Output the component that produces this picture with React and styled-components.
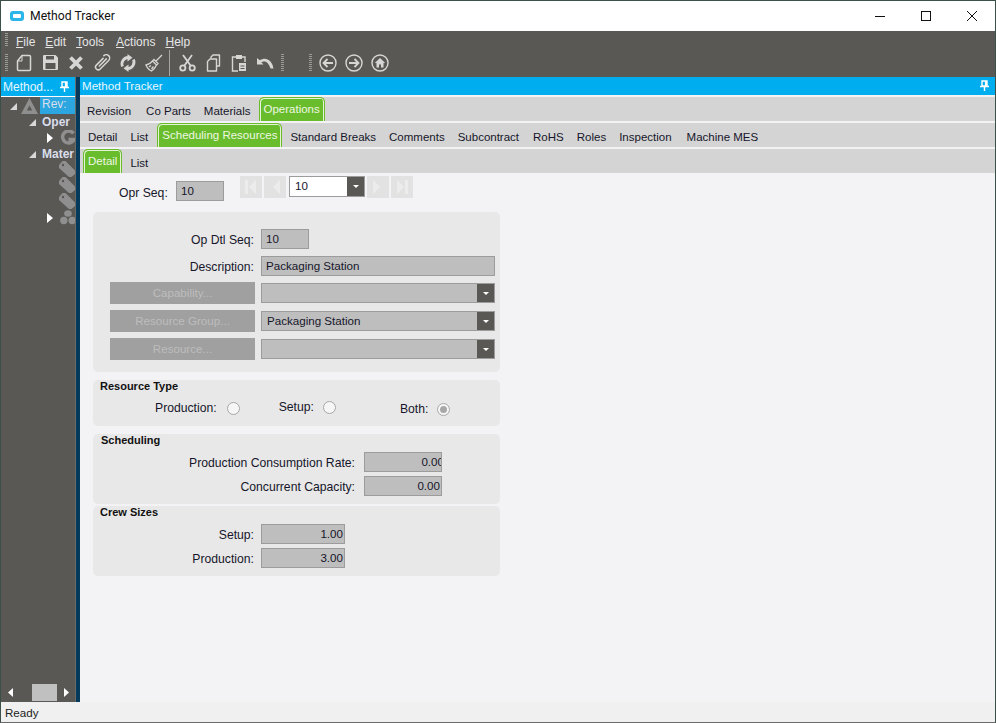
import React from 'react'
import styled, { createGlobalStyle } from 'styled-components'

const Global = createGlobalStyle`
    html, body { margin: 0; padding: 0; background: #fff; }
    * { box-sizing: border-box; }
`

const Win = styled.div`
    width: 996px;
    height: 723px;
    border: 1px solid #3d4f49;
    border-bottom: 1px solid #6a6a6a;
    display: flex;
    flex-direction: column;
    overflow: hidden;
    font-family: "Liberation Sans", Arial, sans-serif;
    font-size: 11.6px;
    color: #16162a;
    background: #f3f3f5;
`

const TitleBar = styled.div`
    height: 30px;
    flex: none;
    background: #fff;
    display: flex;
    align-items: center;
    padding-left: 9px;
    font-family: Roboto, sans-serif;
    font-size: 12.2px;
    color: #111;
`

const AppIcon = styled.span`
    width: 14px;
    height: 10px;
    border-radius: 3px;
    background: #2bb5e8;
    margin-right: 6px;
    display: flex;
    align-items: center;
    justify-content: center;
    &::after {
        content: '';
        width: 8px;
        height: 4px;
        border-radius: 1px;
        background: #fff;
    }
`

const WinButtons = styled.div`
    margin-left: auto;
    display: flex;
`

const WinButton = styled.span`
    width: 46px;
    height: 30px;
    display: flex;
    align-items: center;
    justify-content: center;
`

const MenuBar = styled.div`
    height: 17px;
    flex: none;
    background: #595855;
    display: flex;
    align-items: center;
    color: #e6e6e6;
    font-size: 12px;
    padding-left: 4px;
`

const Grip = styled.span`
    width: 3px;
    height: ${p => p.$h || 16}px;
    flex: none;
    background: repeating-linear-gradient(to bottom, #9a9a96 0 1px, transparent 1px 2px);
    margin-left: ${p => p.$ml || 0}px;
`

const MenuItem = styled.span`
    margin-left: ${p => p.$ml}px;
    padding-top: 4px;
    u { text-underline-offset: 1px; }
`

const ToolBar = styled.div`
    height: 29px;
    flex: none;
    background: #595855;
    display: flex;
    align-items: center;
    padding-left: 4px;
`

const Tool = styled.span`
    width: 26px;
    height: 20px;
    flex: none;
    display: flex;
    align-items: center;
    justify-content: center;
    margin-left: ${p => p.$ml || 0}px;
`

const ToolSep = styled.span`
    width: 1px;
    height: 26px;
    background: #a5a5a2;
    margin: 0 4px 0 2px;
    flex: none;
`

const Work = styled.div`
    flex: 1;
    display: flex;
    min-height: 0;
`

const Side = styled.div`
    width: 74px;
    flex: none;
    background: #595855;
    display: flex;
    flex-direction: column;
    overflow: hidden;
`

const SideHead = styled.div`
    height: 19px;
    flex: none;
    background: #00aeef;
    color: #e8f6fd;
    display: flex;
    align-items: center;
    justify-content: space-between;
    padding: 0 6px 0 2px;
    font-size: 12px;
`

const Tree = styled.div`
    flex: 1;
    border-top: 1px solid #fff;
    overflow: hidden;
`

const Node = styled.div`
    height: ${p => p.$h || 16}px;
    display: flex;
    align-items: center;
    padding-left: ${p => p.$indent}px;
    white-space: nowrap;
    color: #d9deea;
    font-size: 12px;
`

const NodeLabel = styled.span`
    font-weight: ${p => (p.$sel ? 400 : 700)};
    padding: 0 3px 0 2px;
    height: ${p => (p.$sel ? 17 : 16)}px;
    line-height: ${p => (p.$sel ? 15 : 16)}px;
    flex: 1;
    background: ${p => (p.$sel ? '#2ba6e0' : 'transparent')};
    margin-left: ${p => p.$ml || 3}px;
`

const NodeIcon = styled.span`
    display: flex;
    flex: none;
    margin-left: ${p => p.$ml || 0}px;
`

const SideScroll = styled.div`
    height: 19px;
    flex: none;
    display: flex;
    align-items: center;
    padding-left: 7px;
`

const ScrollThumb = styled.span`
    width: 25px;
    height: 17px;
    background: #c0c0c0;
    margin: 0 7px 0 19px;
`

const Splitter = styled.div`
    width: 5px;
    flex: none;
    background: #063a5c;
    border-left: 1px solid #6b6b68;
`

const Main = styled.div`
    flex: 1;
    min-width: 0;
    display: flex;
    flex-direction: column;
`

const MainHead = styled.div`
    height: 18px;
    flex: none;
    background: #00aeef;
    color: #e8f6fd;
    display: flex;
    align-items: center;
    justify-content: space-between;
    padding: 0 6px 1px 2px;
    margin-bottom: 2px;
`

const TabRow = styled.div`
    height: 24px;
    flex: none;
    background: #d4d4d4;
    margin-bottom: ${p => p.$mb ?? 2}px;
    display: flex;
    align-items: stretch;
    padding-left: ${p => p.$pl}px;
    font-size: 11.5px;
`

const Tab = styled.span`
    display: flex;
    align-items: center;
    padding-top: 3px;
    margin-right: ${p => p.$mr || 13}px;
    white-space: nowrap;
`

const ActiveTab = styled.span`
    display: flex;
    align-items: center;
    padding: 0 4px 2px 4px;
    margin-right: ${p => p.$mr || 9}px;
    color: #eef7e2;
    white-space: nowrap;
    background: #69bd2c;
    border: 1px solid #69bd2c;
    border-bottom: 0;
    border-radius: 5px 5px 0 0;
    box-shadow: inset 1px 1px 0 #e4f3d6, inset -1px 0 0 #e4f3d6;
`

const Content = styled.div`
    flex: 1;
    padding-left: 13px;
    min-height: 0;
`

const SeqBar = styled.div`
    height: 39px;
    padding: 3px 0 0 26px;
    display: flex;
    align-items: flex-start;
`

const SeqLabel = styled.span`
    width: 57px;
    flex: none;
    margin-top: 10px;
    font-size: 12.2px;
`

const Field = styled.div`
    width: ${p => p.$w}px;
    height: ${p => p.$h || 20}px;
    flex: none;
    background: #bebebe;
    border: 1px solid #9c9c9c;
    display: flex;
    align-items: center;
    justify-content: ${p => (p.$num ? 'flex-end' : 'flex-start')};
    padding: 0 ${p => (p.$num ? 1 : 4)}px 1px 4px;
    margin-top: ${p => p.$mt || 0}px;
    overflow: hidden;
    white-space: nowrap;
`

const ClippedValue = styled.span`
    margin-right: -4px;
`

const NavBtn = styled.span`
    width: 22px;
    height: 22px;
    flex: none;
    background: #e2e2e2;
    margin-left: ${p => p.$ml || 2}px;
    display: flex;
    align-items: center;
    justify-content: center;
`

const Combo = styled.div`
    width: ${p => p.$w}px;
    height: ${p => p.$h || 20}px;
    flex: none;
    background: ${p => (p.$light ? '#fff' : '#bebebe')};
    border: 1px solid #9c9c9c;
    display: flex;
    align-items: center;
    margin-left: ${p => p.$ml || 0}px;
`

const ComboText = styled.span`
    flex: 1;
    padding: 0 0 2px 5px;
`

const ComboBtn = styled.span`
    width: 17px;
    align-self: stretch;
    background: #595855;
    display: flex;
    align-items: center;
    justify-content: center;
    &::after {
        content: '';
        border-left: 3px solid transparent;
        border-right: 3px solid transparent;
        border-top: 3px solid #fff;
    }
`

const Panel = styled.section`
    width: 407px;
    height: ${p => p.$h}px;
    background: #e8e8e8;
    border-radius: 5px;
    margin-bottom: ${p => p.$mb || 0}px;
    padding: ${p => p.$pt || 0}px 5px 0 ${p => p.$pl || 0}px;
`

const PanelTitle = styled.div`
    font-size: 11px;
    font-weight: 700;
    color: #111;
    height: 13px;
    line-height: 13px;
    margin-bottom: ${p => p.$mb || 0}px;
    padding-left: ${p => p.$pl || 7}px;
`

const FormRow = styled.div`
    height: ${p => p.$h || 22}px;
    display: flex;
    align-items: center;
    margin-top: ${p => p.$mt || 0}px;
`

const RowLabel = styled.span`
    width: ${p => p.$w}px;
    text-align: right;
    flex: none;
    font-size: 12.2px;
    padding-top: 2px;
    margin-right: ${p => p.$mr || 7}px;
`

const LookupBtn = styled.span`
    width: 145px;
    height: 22px;
    flex: none;
    background: #a0a0a0;
    color: #bdbdbd;
    display: flex;
    align-items: center;
    justify-content: center;
    padding-bottom: 2px;
    margin-right: 6px;
`

const RadioRow = styled.div`
    display: flex;
    padding-left: 62px;
    margin-top: 7px;
    font-size: 12.2px;
`

const RadioOption = styled.label`
    display: flex;
    align-items: center;
    height: 16px;
    margin-top: ${p => p.$mt}px;
    margin-right: ${p => p.$mr || 0}px;
`

const Radio = styled.span`
    width: 13px;
    height: 13px;
    border-radius: 50%;
    border: 1px solid #a8a8a8;
    background: #f6f6f6;
    margin-left: ${p => p.$ml || 10}px;
    display: flex;
    align-items: center;
    justify-content: center;
    &::after {
        content: '';
        width: 7px;
        height: 7px;
        border-radius: 50%;
        background: ${p => (p.$on ? '#a8a8a8' : 'transparent')};
    }
`

const Status = styled.div`
    height: 20px;
    flex: none;
    background: #f0f0f0;
    display: flex;
    align-items: center;
    padding: 0 0 0 4px;
    color: #222;
`

const ICON = '#d6d6d4'

const Pin = () => (
    <svg width="9" height="11" viewBox="0 0 9 11" fill="none" stroke="#fff" strokeWidth="1.4">
        <path d="M2 1h5v5H2zM5.600 1v5M0 6.500h9M4.500 6.500V11" />
    </svg>
)

const NewDoc = () => (
    <svg width="16" height="18" viewBox="0 0 16 18" fill="none" stroke={ICON} strokeWidth="1.5" strokeLinejoin="round">
        <path d="M6 1.500h7.500a1 1 0 0 1 1 1v13a1 1 0 0 1-1 1h-11a1 1 0 0 1-1-1V7z" />
        <path d="M6 1.500V7H1.500" strokeWidth="1" />
    </svg>
)

const Floppy = () => (
    <svg width="17" height="17" viewBox="0 0 17 17" fill={ICON}>
        <path d="M1 2a1 1 0 0 1 1-1h11.500L16 3.500V15a1 1 0 0 1-1 1H2a1 1 0 0 1-1-1zM4 2v3.500h8V2zM3.500 9v6h10V9z" fillRule="evenodd" />
    </svg>
)

const Cross = () => (
    <svg width="14" height="14" viewBox="0 0 14 14" stroke={ICON} strokeWidth="3.800">
        <path d="M1.500 1.500l11 11M12.500 1.500l-11 11" />
    </svg>
)

const Clip = () => (
    <svg width="18" height="18" viewBox="0 0 18 18" fill="none" stroke={ICON} strokeWidth="1.500" strokeLinecap="round">
        <g transform="rotate(45 9 9)">
            <path d="M6.500 6v9.500a2.700 2.700 0 0 0 5.400 0V3.500a3.400 3.400 0 0 0-6.800 0" transform="translate(0 -1)" />
            <path d="M9.200 4v10" transform="translate(0 -1)" />
        </g>
    </svg>
)

const Refresh = () => (
    <svg width="18" height="18" viewBox="0 0 18 18" fill={ICON} stroke="none">
        <path d="M3.500 12.500A6.500 6.500 0 0 1 9 3.500" fill="none" stroke={ICON} strokeWidth="2.800" />
        <path d="M8.500 0v7.500l5-3.700z" />
        <path d="M14.500 5.500A6.500 6.500 0 0 1 9 14.500" fill="none" stroke={ICON} strokeWidth="2.800" />
        <path d="M9.500 10.500V18l-5-3.700z" />
    </svg>
)

const Broom = () => (
    <svg width="18" height="18" viewBox="0 0 18 18" fill="none" stroke={ICON} strokeWidth="1.300">
        <path d="M17 1l-6 6M9 5.500l4 4-1.500 1.500-4-4zM7.500 7C6 9 3.500 10.500 1 11c1 2.500 3 5 5.500 6 2-1.500 4-3.500 5-6" />
        <path d="M4 13l2-1.500M6.500 15l2-2.500" />
    </svg>
)

const Shears = () => (
    <svg width="17" height="18" viewBox="0 0 17 18" fill="none" stroke={ICON} strokeWidth="1.800">
        <circle cx="3.800" cy="14" r="2.600" />
        <circle cx="13.200" cy="14" r="2.600" />
        <path d="M5.300 11.800L13 1M11.700 11.800L4 1" />
    </svg>
)

const CopyDocs = () => (
    <svg width="15" height="18" viewBox="0 0 15 18" fill="none" stroke={ICON} strokeWidth="1.400" strokeLinejoin="round">
        <path d="M5 4.500V3l2-2h6.500v11H11" />
        <path d="M4 5h6.500v12h-9V7.500z" />
    </svg>
)

const PasteBoard = () => (
    <svg width="16" height="18" viewBox="0 0 16 18" fill="none" stroke={ICON} strokeWidth="1.400">
        <path d="M5 3H1.500v14H7M11 3h3v5" />
        <rect x="5" y="1" width="6" height="4" fill={ICON} stroke="none" />
        <path d="M8 9h7v8H8z" fill={ICON} stroke="none" />
        <path d="M9.500 12h4M9.500 14.500h4" stroke="#595855" strokeWidth="1" />
    </svg>
)

const UndoArrow = () => (
    <svg width="17" height="12" viewBox="0 0 17 12" fill={ICON}>
        <path d="M0 1v6.500h6.500L4.300 5.300C7 3.500 11 4 13.500 11.500H16.500C15 3 9 -.5 2.800 3.300z" />
    </svg>
)

const CircleArrow = ({ right }) => (
    <svg width="18" height="18" viewBox="0 0 18 18" fill="none" stroke={ICON} strokeWidth="1.400">
        <circle cx="9" cy="9" r="8" />
        <path d={right ? 'M4 9h9M9.500 5l4 4-4 4' : 'M14 9H5M8.500 5l-4 4 4 4'} strokeWidth="1.800" />
    </svg>
)

const HomeCircle = () => (
    <svg width="18" height="18" viewBox="0 0 18 18" fill="none" stroke={ICON} strokeWidth="1.400">
        <circle cx="9" cy="9" r="8" />
        <path d="M9 4L3.800 9H5.500v4.500h2.500V10.500h2v3h2.500V9h1.700z" fill={ICON} stroke="none" />
    </svg>
)

const TreeArrow = ({ open }) => (
    <svg width="9" height="10" viewBox="0 0 9 10" style={{ flex: 'none' }}>
        {open
            ? <path d="M8 2v7H1z" fill="#d8d8d8" />
            : <path d="M1 0l6 5-6 5z" fill="#fff" />}
    </svg>
)

const Warn = () => (
    <svg width="17" height="16" viewBox="0 0 17 16">
        <path d="M8.500 0L17 16H0zM8.500 7.500L5.800 12.500h5.400z" fill="#8f8f8f" fillRule="evenodd" />
    </svg>
)

const Gear = () => (
    <svg width="16" height="16" viewBox="0 0 16 16" fill="none" stroke="#8f8f8f" strokeWidth="3.500">
        <path d="M13.500 3.500A6 6 0 1 0 14 9.500H8.500" />
    </svg>
)

const TagIcon = () => (
    <svg width="16" height="16" viewBox="0 0 16 16">
        <path d="M0 4L3.500 0H6.500L16 9.500V13L12.500 16H10L0 7z" fill="#8f8f8f" />
        <circle cx="4" cy="4" r="1.200" fill="#595855" />
    </svg>
)

const Stack = () => (
    <svg width="16" height="15" viewBox="0 0 16 15" fill="#8f8f8f">
        <ellipse cx="8" cy="3.500" rx="3.800" ry="3.300" />
        <ellipse cx="3.800" cy="10.500" rx="3.700" ry="3.700" />
        <ellipse cx="12.200" cy="10.500" rx="3.700" ry="3.700" />
    </svg>
)

const NavIcon = ({ dir, stop }) => (
    <svg width="14" height="16" viewBox="0 0 14 16" fill="#ececec">
        <g transform={dir === 'r' ? 'matrix(-1 0 0 1 14 0)' : undefined}>
            {stop && <rect x="1" y="1" width="3" height="14" />}
            <path d="M12 1v14L5 8z" />
        </g>
    </svg>
)

const ScrollArrow = ({ right }) => (
    <svg width="5" height="9" viewBox="0 0 5 9" fill="#fff" style={{ flex: 'none' }}>
        <path d={right ? 'M0 0l5 4.500L0 9z' : 'M5 0L0 4.500 5 9z'} />
    </svg>
)

function App() {
    return (
        <Win>
            <Global />
            <TitleBar>
                <AppIcon />
                Method Tracker
                <WinButtons>
                    <WinButton>
                        <svg width="10" height="1"><rect width="10" height="1" fill="#111" /></svg>
                    </WinButton>
                    <WinButton>
                        <svg width="10" height="10" fill="none" stroke="#111"><rect x=".5" y=".5" width="9" height="9" /></svg>
                    </WinButton>
                    <WinButton>
                        <svg width="10" height="10" stroke="#111"><path d="M0 0l10 10M10 0L0 10" /></svg>
                    </WinButton>
                </WinButtons>
            </TitleBar>
            <MenuBar>
                <Grip $h={14} />
                <MenuItem $ml={8}><u>F</u>ile</MenuItem>
                <MenuItem $ml={10}><u>E</u>dit</MenuItem>
                <MenuItem $ml={10}><u>T</u>ools</MenuItem>
                <MenuItem $ml={12}><u>A</u>ctions</MenuItem>
                <MenuItem $ml={10}><u>H</u>elp</MenuItem>
            </MenuBar>
            <ToolBar>
                <Grip $h={18} />
                <Tool $ml={3}><NewDoc /></Tool>
                <Tool><Floppy /></Tool>
                <Tool><Cross /></Tool>
                <Tool><Clip /></Tool>
                <Tool><Refresh /></Tool>
                <Tool><Broom /></Tool>
                <ToolSep />
                <Tool><Shears /></Tool>
                <Tool><CopyDocs /></Tool>
                <Tool><PasteBoard /></Tool>
                <Tool><UndoArrow /></Tool>
                <Grip $h={18} $ml={3} />
                <Grip $h={18} $ml={25} />
                <Tool $ml={3}><CircleArrow /></Tool>
                <Tool><CircleArrow right /></Tool>
                <Tool><HomeCircle /></Tool>
            </ToolBar>
            <Work>
                <Side>
                    <SideHead>Method...<Pin /></SideHead>
                    <Tree>
                        <Node $indent={8} $h={17}>
                            <TreeArrow open />
                            <NodeIcon $ml={3}><Warn /></NodeIcon>
                            <NodeLabel $sel $ml={2}>Rev:</NodeLabel>
                        </Node>
                        <Node $indent={27} $h={16}><TreeArrow open /><NodeLabel>Oper</NodeLabel></Node>
                        <Node $indent={45} $h={16}><TreeArrow /><NodeIcon $ml={5}><Gear /></NodeIcon></Node>
                        <Node $indent={27} $h={15}><TreeArrow open /><NodeLabel>Mater</NodeLabel></Node>
                        <Node $indent={58}><TagIcon /></Node>
                        <Node $indent={58}><TagIcon /></Node>
                        <Node $indent={58}><TagIcon /></Node>
                        <Node $indent={45} $h={17}><TreeArrow /><NodeIcon $ml={5}><Stack /></NodeIcon></Node>
                    </Tree>
                    <SideScroll>
                        <ScrollArrow />
                        <ScrollThumb />
                        <ScrollArrow right />
                    </SideScroll>
                </Side>
                <Splitter />
                <Main>
                    <MainHead>Method Tracker<Pin /></MainHead>
                    <TabRow $pl={7}>
                        <Tab $mr={15}>Revision</Tab>
                        <Tab $mr={13}>Co Parts</Tab>
                        <Tab $mr={8}>Materials</Tab>
                        <ActiveTab>Operations</ActiveTab>
                    </TabRow>
                    <TabRow $pl={8}>
                        <Tab>Detail</Tab>
                        <Tab $mr={9}>List</Tab>
                        <ActiveTab $mr={8}>Scheduling Resources</ActiveTab>
                        <Tab>Standard Breaks</Tab>
                        <Tab>Comments</Tab>
                        <Tab $mr={14}>Subcontract</Tab>
                        <Tab>RoHS</Tab>
                        <Tab>Roles</Tab>
                        <Tab $mr={15}>Inspection</Tab>
                        <Tab>Machine MES</Tab>
                    </TabRow>
                    <TabRow $pl={3} $mb={0}>
                        <ActiveTab $mr={8}>Detail</ActiveTab>
                        <Tab>List</Tab>
                    </TabRow>
                    <Content>
                        <SeqBar>
                            <SeqLabel>Opr Seq:</SeqLabel>
                            <Field $w={48} $mt={5}>10</Field>
                            <NavBtn $ml={16}><NavIcon dir="l" stop /></NavBtn>
                            <NavBtn><NavIcon dir="l" /></NavBtn>
                            <Combo $w={76} $h={21} $ml={3} $light>
                                <ComboText>10</ComboText>
                                <ComboBtn />
                            </Combo>
                            <NavBtn><NavIcon dir="r" /></NavBtn>
                            <NavBtn><NavIcon dir="r" stop /></NavBtn>
                        </SeqBar>
                        <Panel $h={160} $mb={8} $pt={16} $pl={17}>
                            <FormRow>
                                <RowLabel $w={144}>Op Dtl Seq:</RowLabel>
                                <Field $w={48}>10</Field>
                            </FormRow>
                            <FormRow $mt={5}>
                                <RowLabel $w={144}>Description:</RowLabel>
                                <Field $w={234}>Packaging Station</Field>
                            </FormRow>
                            <FormRow $mt={5}>
                                <LookupBtn>Capability...</LookupBtn>
                                <Combo $w={234}><ComboText /><ComboBtn /></Combo>
                            </FormRow>
                            <FormRow $mt={6}>
                                <LookupBtn>Resource Group...</LookupBtn>
                                <Combo $w={234}><ComboText>Packaging Station</ComboText><ComboBtn /></Combo>
                            </FormRow>
                            <FormRow $mt={6}>
                                <LookupBtn>Resource...</LookupBtn>
                                <Combo $w={234}><ComboText /><ComboBtn /></Combo>
                            </FormRow>
                        </Panel>
                        <Panel $h={46} $mb={8}>
                            <PanelTitle>Resource Type</PanelTitle>
                            <RadioRow>
                                <RadioOption $mt={0} $mr={39}>Production:<Radio /></RadioOption>
                                <RadioOption $mt={-1} $mr={64}>Setup:<Radio $ml={9} /></RadioOption>
                                <RadioOption $mt={1}>Both:<Radio $ml={9} $on /></RadioOption>
                            </RadioRow>
                        </Panel>
                        <Panel $h={70} $mb={2}>
                            <PanelTitle $mb={5} $pl={8}>Scheduling</PanelTitle>
                            <FormRow $h={20}>
                                <RowLabel $w={262} $mr={9}>Production Consumption Rate:</RowLabel>
                                <Field $w={78} $num><ClippedValue>0.00</ClippedValue></Field>
                            </FormRow>
                            <FormRow $h={20} $mt={4}>
                                <RowLabel $w={262} $mr={9}>Concurrent Capacity:</RowLabel>
                                <Field $w={78} $num>0.00</Field>
                            </FormRow>
                        </Panel>
                        <Panel $h={70}>
                            <PanelTitle $mb={5}>Crew Sizes</PanelTitle>
                            <FormRow $h={20}>
                                <RowLabel $w={161}>Setup:</RowLabel>
                                <Field $w={84} $num>1.00</Field>
                            </FormRow>
                            <FormRow $h={20} $mt={4}>
                                <RowLabel $w={161}>Production:</RowLabel>
                                <Field $w={84} $num>3.00</Field>
                            </FormRow>
                        </Panel>
                    </Content>
                </Main>
            </Work>
            <Status>Ready</Status>
        </Win>
    )
}

export default App
